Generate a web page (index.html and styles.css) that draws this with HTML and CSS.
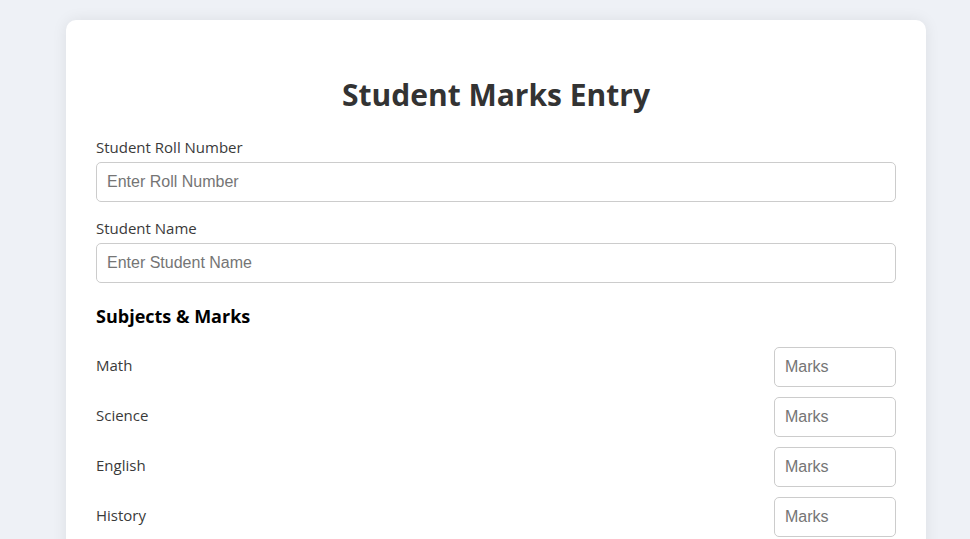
FILE: index.html
```html
<!DOCTYPE html>
<html>
<head>
<meta charset="utf-8">
<link rel="stylesheet" href="styles.css">
</head>
<body>
<div class="card">
  <h1 class="title">Student Marks Entry</h1>
  <div class="group">
    <label class="label">Student Roll Number</label>
    <input class="field" type="text" placeholder="Enter Roll Number">
  </div>
  <div class="group">
    <label class="label">Student Name</label>
    <input class="field" type="text" placeholder="Enter Student Name">
  </div>
  <h3 class="subhead">Subjects &amp; Marks</h3>
  <div class="subject"><span class="subj-name">Math</span><input class="marks" type="number" placeholder="Marks"></div>
  <div class="subject"><span class="subj-name">Science</span><input class="marks" type="number" placeholder="Marks"></div>
  <div class="subject"><span class="subj-name">English</span><input class="marks" type="number" placeholder="Marks"></div>
  <div class="subject"><span class="subj-name">History</span><input class="marks" type="number" placeholder="Marks"></div>
</div>
</body>
</html>
```
FILE: styles.css
```css
html, body { margin: 0; padding: 0; }
body {
  background: #eef1f6;
  font-family: "Open Sans", "Noto Sans", sans-serif;
  padding: 20px 44px 0 66px;
  height: 539px;
  box-sizing: border-box;
  overflow: hidden;
}
.card {
  width: 860px;
  box-sizing: border-box;
  background: #fff;
  border-radius: 10px;
  box-shadow: 0 0 15px rgba(0,0,0,0.08);
  padding: 30px 30px 30px;
  min-height: 600px;
}
.title {
  text-align: center;
  font-size: 30px;
  font-weight: 700;
  color: #333;
  margin: 25px 0 22px;
  line-height: 40px;
}
.group { margin-bottom: 16px; }
.label {
  display: block;
  font-size: 15px;
  line-height: 20px;
  color: #3a3a3a;
  margin-bottom: 5px;
}
.field {
  display: block;
  width: 100%;
  box-sizing: border-box;
  height: 40px;
  border: 1px solid #ccc;
  border-radius: 5px;
  padding: 0 10px;
  font-family: "Liberation Sans", Arial, sans-serif;
  font-size: 16px;
  color: #333;
}
.field::placeholder, .marks::placeholder { color: #757575; }
.subhead {
  font-size: 18px;
  font-weight: 700;
  color: #000;
  margin: 21px 0 19px;
  line-height: 24px;
}
.subject {
  display: flex;
  justify-content: space-between;
  align-items: center;
  margin-bottom: 10px;
}
.subj-name { font-size: 15px; color: #3a3a3a; padding-bottom: 4px; }
.marks {
  width: 122px;
  height: 40px;
  box-sizing: border-box;
  border: 1px solid #ccc;
  border-radius: 5px;
  padding: 0 10px;
  font-family: "Liberation Sans", Arial, sans-serif;
  font-size: 16px;
  -moz-appearance: textfield;
}
.marks::-webkit-outer-spin-button, .marks::-webkit-inner-spin-button { -webkit-appearance: none; margin: 0; }
```
